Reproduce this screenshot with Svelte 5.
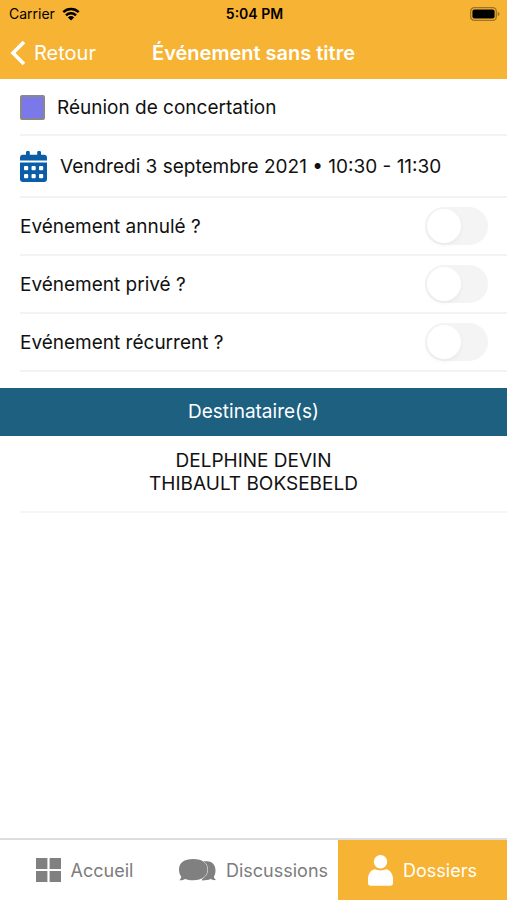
<script lang="ts">
  let options = $state([
    { id: 'cancelled', label: 'Evénement annulé ?', checked: false },
    { id: 'private', label: 'Evénement privé ?', checked: false },
    { id: 'recurring', label: 'Evénement récurrent ?', checked: false }
  ]);

  const recipients = ['DELPHINE DEVIN', 'THIBAULT BOKSEBELD'];

  const tabs = [
    { id: 'home', label: 'Accueil' },
    { id: 'chat', label: 'Discussions' },
    { id: 'folders', label: 'Dossiers' }
  ];

  let activeTab = $state('folders');
</script>

<div class="screen">
  <header class="header">
    <div class="status-bar">
      <span class="carrier">
        Carrier
        <svg class="wifi" viewBox="0 0 18 14" aria-hidden="true">
          <path d="M1.3 5.2a11 11 0 0 1 15.4 0M4 8.3a7.2 7.2 0 0 1 10 0" fill="none" stroke="#000" stroke-width="2.4" />
          <path d="M9 13.6 5.9 10.5a4.5 4.5 0 0 1 6.2 0z" />
        </svg>
      </span>
      <span class="time">5:04 PM</span>
      <svg class="battery" viewBox="0 0 30 14" aria-hidden="true">
        <rect x="0.7" y="0.7" width="25.6" height="12.6" rx="3.6" fill="none" stroke="#9a7427" stroke-width="1.3" />
        <rect x="2.4" y="2.4" width="22.2" height="9.2" rx="2" />
        <path d="M27.7 4.8c2.4.8 2.4 3.6 0 4.4z" fill="#9a7427" />
      </svg>
    </div>
    <div class="nav-bar">
      <button class="back" type="button">
        <svg viewBox="0 0 16 26" aria-hidden="true">
          <path d="M14 2 3 13l11 11" fill="none" stroke="#fff" stroke-width="3.6" />
        </svg>
        Retour
      </button>
      <h1>Événement sans titre</h1>
    </div>
  </header>

  <main>
    <div class="row row-title">
      <span class="swatch"></span>
      Réunion de concertation
    </div>
    <div class="row row-date">
      <svg class="calendar" viewBox="0 0 27 31" aria-hidden="true">
        <path d="M0 9.6V6.8a3 3 0 0 1 3-3h3V1.2Q6 0 7.2 0h1.4Q9.8 0 9.8 1.2v2.600h7.4V1.2Q17.2 0 18.4 0h1.4Q21 0 21 1.2v2.600h3a3 3 0 0 1 3 3v2.800z" />
        <path d="M0 11.600h27V28a3 3 0 0 1-3 3H3a3 3 0 0 1-3-3z" />
        <g fill="#fff">
          {#each [15, 23] as y}
            {#each [4, 11.5, 19] as x}
              <rect {x} {y} width="4.200" height="4.200" rx="1" />
            {/each}
          {/each}
        </g>
      </svg>
      Vendredi 3 septembre 2021 • 10:30 - 11:30
    </div>
    {#each options as option (option.id)}
      <div class="row row-option">
        <label for={option.id}>{option.label}</label>
        <input id={option.id} class="switch" type="checkbox" role="switch" bind:checked={option.checked} />
      </div>
    {/each}

    <h2>Destinataire(s)</h2>
    <ul class="recipients">
      {#each recipients as name}
        <li>{name}</li>
      {/each}
    </ul>
  </main>

  <nav class="tab-bar">
    {#each tabs as tab (tab.id)}
      <button type="button" class="tab" class:active={activeTab === tab.id} onclick={() => (activeTab = tab.id)}>
        {#if tab.id === 'home'}
          <svg class="icon-home" viewBox="0 0 25 24" aria-hidden="true">
            <path d="M0 0h11.400v11H0zM13.600 0H25v11H13.600zM0 13h11.400v11H0zM13.600 13H25v11H13.600z" />
          </svg>
        {:else if tab.id === 'chat'}
          <svg class="icon-chat" viewBox="0 0 37 22" aria-hidden="true">
            <path d="M24 2.200h4c5.500 0 8.500 4 8.500 9.300 0 2.500-.6 4.500-1.600 6.200.2 1.300.9 2.300 2.100 3.400-2.200.3-3.900-.1-5.300-1-2.400 1.200-5 1.300-8.700 1.300z" />
            <path class="bubble" d="M14.200 0C23.400 0 28.400 3.800 28.400 10.600S23.400 21.200 14.200 21.200c-3.200 0-5.900-.4-8.100-1.300-1.600 1.100-3.500 1.600-5.700 1.400 1.200-1.200 1.700-2.300 1.800-3.700C.7 15.800 0 13.500 0 10.600 0 3.800 5 0 14.200 0z" />
          </svg>
        {:else}
          <svg class="icon-user" viewBox="0 0 25 31" aria-hidden="true">
            <circle cx="12.500" cy="6.800" r="6.700" />
            <path d="M6.500 14.300c3.600 1.500 8.400 1.500 12 0 4 1.200 6.500 5 6.500 9.700v4a2.800 2.800 0 0 1-2.800 2.800H2.800A2.800 2.800 0 0 1 0 28v-4c0-4.700 2.500-8.500 6.500-9.700z" />
          </svg>
        {/if}
        {tab.label}
      </button>
    {/each}
  </nav>
</div>

<style>
  :global(body) {
    margin: 0;
    background: #fff;
  }

  .screen {
    display: flex;
    flex-direction: column;
    min-height: 100vh;
    font-family: Inter, "Liberation Sans", sans-serif;
    font-size: 19px;
    line-height: 23px;
    color: #111;
  }

  button {
    border: 0;
    padding: 0;
    background: none;
    font: inherit;
    cursor: pointer;
  }

  .header {
    background: #f7b334;
  }

  .status-bar {
    display: grid;
    grid-template-columns: 1fr auto 1fr;
    align-items: center;
    height: 27px;
    padding: 0 7px 0 9px;
    font-size: 14px;
    color: #000;
  }

  .carrier {
    display: flex;
    align-items: center;
    gap: 7px;
  }

  .wifi {
    width: 18px;
    height: 14px;
  }

  .time {
    font-weight: 600;
  }

  .battery {
    justify-self: end;
    width: 30px;
    height: 14px;
  }

  .nav-bar {
    display: grid;
    grid-template-columns: 1fr auto 1fr;
    align-items: center;
    height: 52px;
    padding: 0 10px;
    color: #fff;
  }

  .back {
    display: flex;
    align-items: center;
    justify-self: start;
    gap: 8px;
    font-size: 20px;
    color: #fff;
  }

  .back svg {
    width: 16px;
    height: 26px;
  }

  h1 {
    margin: 0;
    font-size: 20px;
    font-weight: 600;
  }

  main {
    flex: 1;
    padding-top: 1px;
  }

  .row {
    display: flex;
    align-items: center;
    box-sizing: border-box;
    margin-left: 20px;
    border-bottom: 2px solid #f3f3f3;
  }

  .row-title {
    gap: 12px;
    min-height: 56px;
  }

  .swatch {
    box-sizing: border-box;
    width: 25px;
    height: 25px;
    border: 2px solid #888;
    border-radius: 2px;
    background: #7b79e9;
  }

  .row-date {
    gap: 13px;
    min-height: 62px;
  }

  .calendar {
    width: 27px;
    height: 31px;
    fill: #0a5da6;
  }

  .row-option {
    justify-content: space-between;
    min-height: 58px;
    padding-right: 19px;
  }

  .switch {
    appearance: none;
    width: 63px;
    height: 38px;
    margin: 0;
    padding: 2px;
    box-sizing: border-box;
    border-radius: 19px;
    background: #f4f4f4;
    cursor: pointer;
  }

  .switch::before {
    content: "";
    display: block;
    width: 34px;
    height: 34px;
    border-radius: 50%;
    background: #fff;
    box-shadow: 0 2px 5px rgba(0, 0, 0, 0.05);
    transition: margin 0.2s;
  }

  .switch:checked {
    background: #f7b334;
  }

  .switch:checked::before {
    margin-left: 25px;
  }

  h2 {
    margin: 16px 0 0;
    padding: 12px;
    background: #1d6080;
    color: #fff;
    font-size: 19px;
    font-weight: 400;
    line-height: 24px;
    text-align: center;
  }

  .recipients {
    margin: 0 0 0 20px;
    padding: 13px 20px 16px 0;
    border-bottom: 2px solid #f5f5f5;
    list-style: none;
    text-align: center;
  }

  .tab-bar {
    display: grid;
    grid-template-columns: 1fr 1fr 1fr;
    height: 60px;
    border-top: 2px solid #ddd;
  }

  .tab {
    display: flex;
    align-items: center;
    justify-content: center;
    gap: 10px;
    font-size: 18px;
    color: #7c7c7c;
    fill: #808080;
  }

  .tab.active {
    background: #f7b334;
    color: #fff;
    fill: #fff;
  }

  .icon-home {
    width: 25px;
    height: 24px;
  }

  .icon-chat {
    width: 37px;
    height: 22px;
    overflow: visible;
  }

  .bubble {
    stroke: #fff;
    stroke-width: 1;
    paint-order: stroke;
  }

  .icon-user {
    width: 25px;
    height: 31px;
  }
</style>
